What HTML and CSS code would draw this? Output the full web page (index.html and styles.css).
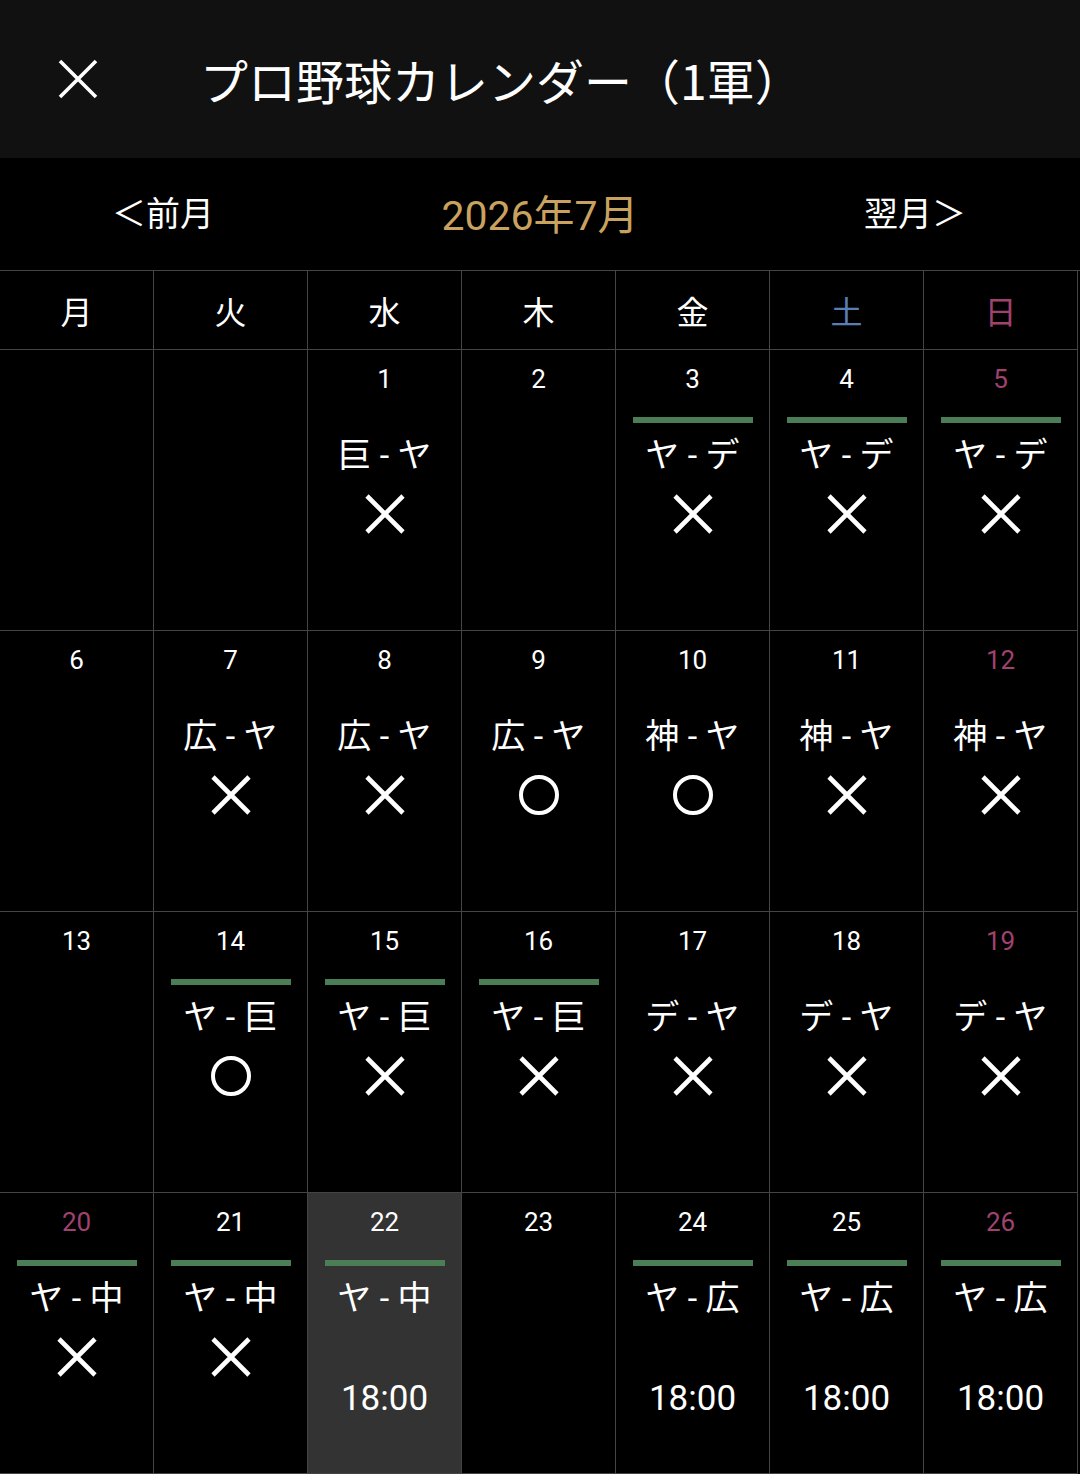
FILE: index.html
```html
<!DOCTYPE html>
<html lang="ja">
<head>
<meta charset="utf-8">
<title>プロ野球カレンダー（1軍）</title>
<link rel="stylesheet" href="styles.css">
</head>
<body>
<header class="appbar">
  <span class="close">
    <svg width="40" height="40" viewBox="0 0 40 40"><path d="M2 2 L38 38 M38 2 L2 38" stroke="#fff" stroke-width="3.6" fill="none"/></svg>
  </span>
  <h1 class="title">プロ野球カレンダー（1軍）</h1>
</header>
<nav class="monthnav">
  <span class="nav-prev">＜前月</span>
  <span class="nav-cur">2026年7月</span>
  <span class="nav-next">翌月＞</span>
</nav>
<div class="weekdays">
  <div class="wd">月</div><div class="wd">火</div><div class="wd">水</div><div class="wd">木</div><div class="wd">金</div><div class="wd sat">土</div><div class="wd sun">日</div>
</div>

<div class="week">
  <div class="cell"></div>
  <div class="cell"></div>
  <div class="cell"><div class="day">1</div><div class="bar off"></div><div class="game">巨 - ヤ</div><div class="mark"><svg class="x" viewBox="0 0 40 40"><path d="M2 2 L38 38 M38 2 L2 38"/></svg></div></div>
  <div class="cell"><div class="day">2</div></div>
  <div class="cell"><div class="day">3</div><div class="bar"></div><div class="game">ヤ - デ</div><div class="mark"><svg class="x" viewBox="0 0 40 40"><path d="M2 2 L38 38 M38 2 L2 38"/></svg></div></div>
  <div class="cell"><div class="day">4</div><div class="bar"></div><div class="game">ヤ - デ</div><div class="mark"><svg class="x" viewBox="0 0 40 40"><path d="M2 2 L38 38 M38 2 L2 38"/></svg></div></div>
  <div class="cell"><div class="day hol">5</div><div class="bar"></div><div class="game">ヤ - デ</div><div class="mark"><svg class="x" viewBox="0 0 40 40"><path d="M2 2 L38 38 M38 2 L2 38"/></svg></div></div>
</div>

<div class="week">
  <div class="cell"><div class="day">6</div></div>
  <div class="cell"><div class="day">7</div><div class="bar off"></div><div class="game">広 - ヤ</div><div class="mark"><svg class="x" viewBox="0 0 40 40"><path d="M2 2 L38 38 M38 2 L2 38"/></svg></div></div>
  <div class="cell"><div class="day">8</div><div class="bar off"></div><div class="game">広 - ヤ</div><div class="mark"><svg class="x" viewBox="0 0 40 40"><path d="M2 2 L38 38 M38 2 L2 38"/></svg></div></div>
  <div class="cell"><div class="day">9</div><div class="bar off"></div><div class="game">広 - ヤ</div><div class="mark"><svg class="o" viewBox="0 0 40 40"><circle cx="20" cy="20" r="18"/></svg></div></div>
  <div class="cell"><div class="day">10</div><div class="bar off"></div><div class="game">神 - ヤ</div><div class="mark"><svg class="o" viewBox="0 0 40 40"><circle cx="20" cy="20" r="18"/></svg></div></div>
  <div class="cell"><div class="day">11</div><div class="bar off"></div><div class="game">神 - ヤ</div><div class="mark"><svg class="x" viewBox="0 0 40 40"><path d="M2 2 L38 38 M38 2 L2 38"/></svg></div></div>
  <div class="cell"><div class="day hol">12</div><div class="bar off"></div><div class="game">神 - ヤ</div><div class="mark"><svg class="x" viewBox="0 0 40 40"><path d="M2 2 L38 38 M38 2 L2 38"/></svg></div></div>
</div>

<div class="week">
  <div class="cell"><div class="day">13</div></div>
  <div class="cell"><div class="day">14</div><div class="bar"></div><div class="game">ヤ - 巨</div><div class="mark"><svg class="o" viewBox="0 0 40 40"><circle cx="20" cy="20" r="18"/></svg></div></div>
  <div class="cell"><div class="day">15</div><div class="bar"></div><div class="game">ヤ - 巨</div><div class="mark"><svg class="x" viewBox="0 0 40 40"><path d="M2 2 L38 38 M38 2 L2 38"/></svg></div></div>
  <div class="cell"><div class="day">16</div><div class="bar"></div><div class="game">ヤ - 巨</div><div class="mark"><svg class="x" viewBox="0 0 40 40"><path d="M2 2 L38 38 M38 2 L2 38"/></svg></div></div>
  <div class="cell"><div class="day">17</div><div class="bar off"></div><div class="game">デ - ヤ</div><div class="mark"><svg class="x" viewBox="0 0 40 40"><path d="M2 2 L38 38 M38 2 L2 38"/></svg></div></div>
  <div class="cell"><div class="day">18</div><div class="bar off"></div><div class="game">デ - ヤ</div><div class="mark"><svg class="x" viewBox="0 0 40 40"><path d="M2 2 L38 38 M38 2 L2 38"/></svg></div></div>
  <div class="cell"><div class="day hol">19</div><div class="bar off"></div><div class="game">デ - ヤ</div><div class="mark"><svg class="x" viewBox="0 0 40 40"><path d="M2 2 L38 38 M38 2 L2 38"/></svg></div></div>
</div>

<div class="week">
  <div class="cell"><div class="day hol">20</div><div class="bar"></div><div class="game">ヤ - 中</div><div class="mark"><svg class="x" viewBox="0 0 40 40"><path d="M2 2 L38 38 M38 2 L2 38"/></svg></div></div>
  <div class="cell"><div class="day">21</div><div class="bar"></div><div class="game">ヤ - 中</div><div class="mark"><svg class="x" viewBox="0 0 40 40"><path d="M2 2 L38 38 M38 2 L2 38"/></svg></div></div>
  <div class="cell today"><div class="day">22</div><div class="bar"></div><div class="game">ヤ - 中</div><div class="mark"></div><div class="time">18:00</div></div>
  <div class="cell"><div class="day">23</div></div>
  <div class="cell"><div class="day">24</div><div class="bar"></div><div class="game">ヤ - 広</div><div class="mark"></div><div class="time">18:00</div></div>
  <div class="cell"><div class="day">25</div><div class="bar"></div><div class="game">ヤ - 広</div><div class="mark"></div><div class="time">18:00</div></div>
  <div class="cell"><div class="day hol">26</div><div class="bar"></div><div class="game">ヤ - 広</div><div class="mark"></div><div class="time">18:00</div></div>
</div>
</body>
</html>
```
FILE: styles.css
```css
html, body {
  margin: 0;
  padding: 0;
  background: #000;
}
body {
  width: 1080px;
  height: 1474px;
  overflow: hidden;
  color: #fff;
  font-family: Roboto, "Noto Sans CJK JP", sans-serif;
}
.appbar {
  height: 158px;
  background: #111;
  display: flex;
  align-items: center;
}
.close {
  margin-left: 58px;
  width: 40px;
  height: 40px;
  display: flex;
}
.title {
  margin: 0 0 0 102px;
  font-family: "Noto Sans CJK JP", sans-serif;
  font-weight: 400;
  font-size: 48px;
  line-height: 60px;
  color: #fff;
}
.monthnav {
  height: 112px;
  box-sizing: border-box;
  padding-bottom: 5px;
  display: flex;
  align-items: center;
}
.nav-prev, .nav-next {
  width: 330px;
  text-align: center;
  font-size: 34px;
  font-family: "Noto Sans CJK JP", sans-serif;
}
.nav-prev { text-indent: -4px; }
.nav-cur {
  width: 420px;
  text-align: center;
  font-size: 41px;
  color: #c9a25f;
}
.weekdays {
  display: grid;
  grid-template-columns: repeat(7, 154px);
  height: 80px;
  box-sizing: border-box;
  border-top: 1px solid #444;
}
.wd {
  box-sizing: border-box;
  border-right: 1px solid #444;
  border-bottom: 1px solid #444;
  display: flex;
  align-items: center;
  justify-content: center;
  font-family: "Noto Sans CJK JP", sans-serif;
  font-size: 32px;
}
.wd.sat { color: #5b7db3; }
.wd.sun { color: #a0426f; }
.week {
  display: grid;
  grid-template-columns: repeat(7, 154px);
  height: 281px;
}
.cell {
  box-sizing: border-box;
  border-right: 1px solid #444;
  border-bottom: 1px solid #444;
  display: flex;
  flex-direction: column;
  align-items: center;
  padding-top: 14px;
}
.cell.today { background: #333; }
.day {
  height: 30px;
  line-height: 30px;
  font-size: 26px;
}
.day.hol { color: #a0426f; }
.bar {
  width: 120px;
  height: 6px;
  margin-top: 23px;
  background: #4b7d57;
}
.bar.off { background: transparent; }
.game {
  margin-top: 12px;
  height: 40px;
  line-height: 40px;
  font-size: 34px;
  white-space: pre;
}
.mark {
  margin-top: 19px;
  width: 40px;
  height: 40px;
}
.mark svg {
  width: 40px;
  height: 40px;
  display: block;
}
.mark .x path {
  stroke: #fff;
  stroke-width: 4.6;
  fill: none;
}
.mark .o circle {
  stroke: #fff;
  stroke-width: 4;
  fill: none;
}
.time {
  margin-top: 2px;
  height: 40px;
  line-height: 40px;
  font-size: 35px;
}
```
